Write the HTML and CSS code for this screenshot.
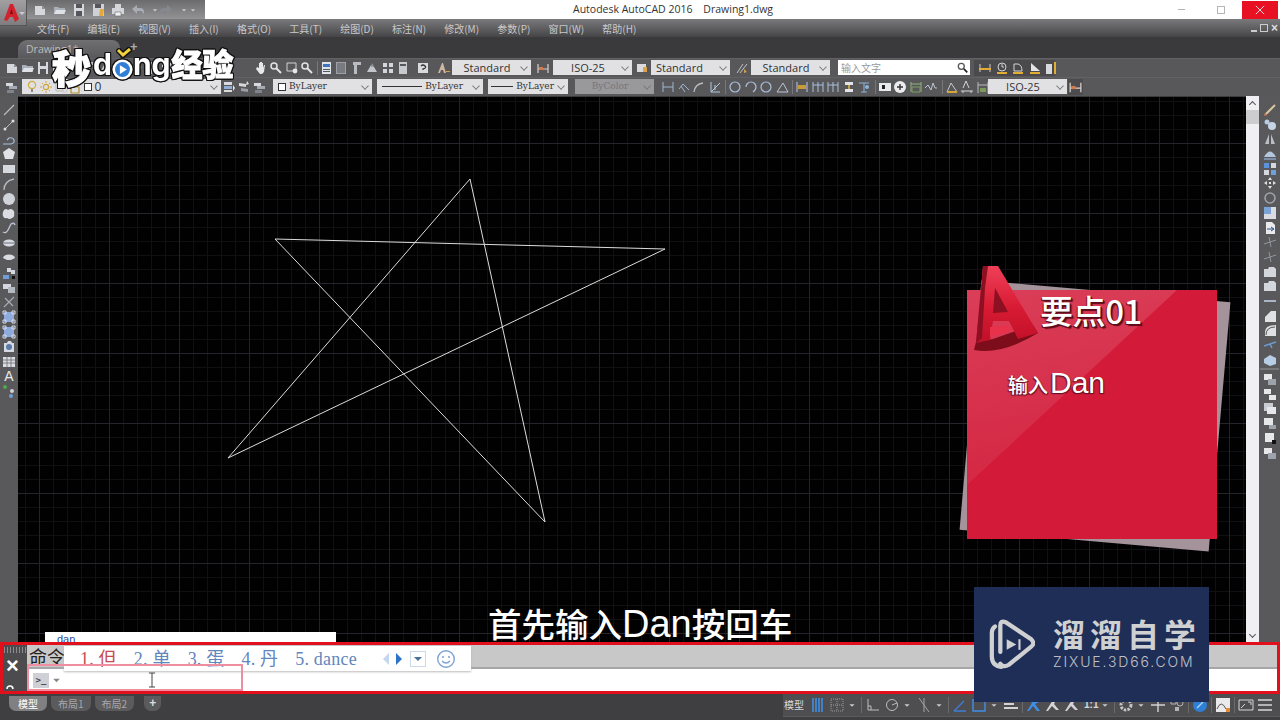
FILE: index.html
```html
<!DOCTYPE html>
<html lang="zh">
<head>
<meta charset="utf-8">
<title>Autodesk AutoCAD 2016</title>
<link rel="stylesheet" href="styles.css">
</head>
<body>
<svg class="defs" aria-hidden="true">
  <symbol id="doc" viewBox="0 0 14 14"><path d="M2 3h7l3 3v6H2z" fill="#d5d7dc"/><path d="M9 3v3h3" fill="#8f9299"/></symbol>
  <symbol id="open" viewBox="0 0 14 14"><path d="M1 4h4l1 1h6v6H1z" fill="#aab0ba"/><path d="M3 7h10l-2 4H1z" fill="#dfe1e6"/></symbol>
  <symbol id="save" viewBox="0 0 14 14"><path d="M2 1h10v12H2z" fill="#d6d8dd"/><path d="M4 1h6v4H4zM4 8h6v5H4z" fill="#55565c"/></symbol>
  <symbol id="saveas" viewBox="0 0 14 14"><path d="M1 1h11v12H1z" fill="#cfd1d6"/><path d="M3 1h6v4H3z" fill="#55565c"/><path d="M8 6l4 0-1 7H7z" fill="#e4a93c"/></symbol>
  <symbol id="print" viewBox="0 0 14 14"><path d="M4 1h6v4H4zM1 5h12v6H1z" fill="#d4d6db"/><path d="M4 9h6v4H4z" fill="#f0f0f2" stroke="#66676c" stroke-width=".6"/></symbol>
  <symbol id="undo" viewBox="0 0 14 14"><path d="M1 6l5-4v3h3q4 0 4 4v3q-1-4-4-4H6v3z" fill="#a8acb5"/></symbol>
  <symbol id="redo" viewBox="0 0 14 14"><path d="M13 6L8 2v3H5Q1 5 1 9v3q1-4 4-4h3v3z" fill="#85888f"/></symbol>
  <symbol id="caret" viewBox="0 0 14 14"><path d="M4 6h6l-3 3z" fill="#c9cbd0"/></symbol>
  <symbol id="hand" viewBox="0 0 14 14"><path d="M3 6l2 1V2h1v4V1h2v5V2h1v5l1-3h1l-1 7-2 2H6L2 8z" fill="#e6e7ea"/></symbol>
  <symbol id="zoom" viewBox="0 0 14 14"><circle cx="5" cy="5" r="3" fill="none" stroke="#e2e3e7" stroke-width="1.5"/><path d="M7 7l5 5" stroke="#e2e3e7" stroke-width="2"/></symbol>
  <symbol id="zoomw" viewBox="0 0 14 14"><path d="M2 2h9v8H2z" fill="none" stroke="#d0d2d8"/><circle cx="10" cy="10" r="2.4" fill="#e8e8ea"/></symbol>
  <symbol id="prop" viewBox="0 0 14 14"><path d="M3 1h9v12H3z" fill="#dfe3ea"/><path d="M4 3h7v3H4z" fill="#3f74bf"/><path d="M4 8h7v1H4zM4 10h7v1H4z" fill="#56585f"/></symbol>
  <symbol id="sheet" viewBox="0 0 14 14"><path d="M2 1h10v12H2z" fill="#9da0a6"/><path d="M3 3h8M3 5h8M3 7h8M3 9h8M3 11h8" stroke="#55565c"/></symbol>
  <symbol id="tool" viewBox="0 0 14 14"><path d="M3 1h8v3H7v9H4V4H3z" fill="#b9bcc3"/></symbol>
  <symbol id="cup" viewBox="0 0 14 14"><path d="M2 11l4-7 3 2 3 5z" fill="#c2c5cb"/><path d="M7 2l2 3-3 1z" fill="#8d9098"/></symbol>
  <symbol id="sheets" viewBox="0 0 14 14"><path d="M2 2h4v4H2zM8 2h4v4H8zM2 8h4v4H2zM8 8h4v4H8z" fill="#d3d5da"/></symbol>
  <symbol id="calc" viewBox="0 0 14 14"><path d="M3 1h8v12H3z" fill="#c8cad0"/><path d="M4 3h6v2H4z" fill="#56575c"/></symbol>
  <symbol id="help" viewBox="0 0 14 14"><path d="M2 2h10v10H2z" fill="#d9dade"/><path d="M5 5q2-2 4 0t-2 3v1" fill="none" stroke="#333" stroke-width="1.3"/></symbol>
  <symbol id="txtst" viewBox="0 0 14 14"><path d="M1 12L5 2h1l3 10H7l-1-3H4l-1 3z" fill="#cdb7a2"/><path d="M9 10h4v1H9z" fill="#d89c4a"/></symbol>
  <symbol id="dimst" viewBox="0 0 14 14"><path d="M2 3v9M12 3v9M2 8h10" stroke="#d7d0c8" stroke-width="1.2" fill="none"/><path d="M3 6h4v3H3z" fill="#d27a4a"/></symbol>
  <symbol id="tbst" viewBox="0 0 14 14"><path d="M2 3h9v8H2z" fill="#d8dade"/><path d="M8 6l4 0v5H8z" fill="#dca24c"/></symbol>
  <symbol id="mlst" viewBox="0 0 14 14"><path d="M2 12L8 3M5 12l7-9" stroke="#bfc2c8" fill="none"/><path d="M9 8l3 3-3 1z" fill="#d2a24b"/></symbol>
  <symbol id="y1" viewBox="0 0 14 14"><path d="M2 3v8M12 3v8" stroke="#c8cad0"/><path d="M1 7h12v2H1z" fill="#e1ad34"/></symbol>
  <symbol id="y2" viewBox="0 0 14 14"><circle cx="7" cy="6" r="4" fill="none" stroke="#d0d2d8"/><path d="M7 3v3h2" stroke="#d0d2d8" fill="none"/><path d="M2 11h10v2H2z" fill="#e1ad34"/></symbol>
  <symbol id="y3" viewBox="0 0 14 14"><path d="M3 10V3h4q4 1 4 7z" fill="none" stroke="#d0d2d8"/><path d="M2 11h10v2H2z" fill="#e1ad34"/></symbol>
  <symbol id="y4" viewBox="0 0 14 14"><path d="M3 10V2l9 8z" fill="#e2e3e6"/><path d="M2 11h10v2H2z" fill="#e1ad34"/></symbol>
  <symbol id="y5" viewBox="0 0 14 14"><path d="M2 3h6v10H2z" fill="#d7d9de"/><path d="M10 1h2v12h-2z" fill="#e1ad34"/></symbol>
  <symbol id="layer" viewBox="0 0 14 14"><path d="M1 3h7v3H1z" fill="#d6d8dc"/><path d="M4 6h8v3H4z" fill="#a7abb3"/><path d="M2 10h7v3H2z" fill="#7f838b"/></symbol>
  <symbol id="bulb" viewBox="0 0 14 14"><circle cx="7" cy="5" r="3.6" fill="none" stroke="#d2ac3c" stroke-width="1.2"/><path d="M6 9h2v3H6z" fill="#8a8a8a"/></symbol>
  <symbol id="sun" viewBox="0 0 14 14"><circle cx="7" cy="7" r="2.6" fill="none" stroke="#cfa53a" stroke-width="1.2"/><path d="M7 1v2M7 11v2M1 7h2M11 7h2M3 3l1 1M10 10l1 1M3 11l1-1M10 4l1-1" stroke="#cfa53a"/></symbol>
  <symbol id="frz" viewBox="0 0 14 14"><path d="M2 3h7v8H2z" fill="none" stroke="#b8b8b8"/><path d="M8 7h5v5H8z" fill="none" stroke="#c9c9c9"/></symbol>
  <symbol id="lock" viewBox="0 0 14 14"><path d="M3 7h8v6H3z" fill="none" stroke="#b08e2c" stroke-width="1.2"/><path d="M5 7V4q2-3 4 0" fill="none" stroke="#b08e2c"/></symbol>
  <symbol id="lyr2" viewBox="0 0 14 14"><path d="M2 2h8v3H2z" fill="#d8dade"/><path d="M2 6h8v3H2z" fill="#8faed8"/><path d="M2 10h8v2H2z" fill="#d8dade"/><path d="M11 5l2 3-2 3z" fill="#e7e8ea"/></symbol>
  <symbol id="lyr3" viewBox="0 0 14 14"><path d="M2 3l7 1v3L2 6z" fill="#d6d8dc"/><path d="M4 8l7 1v3l-7-1z" fill="#9a9ea6"/><path d="M10 1l2 3-3 1z" fill="#dfe0e4"/></symbol>
  <symbol id="dim1" viewBox="0 0 14 14"><path d="M2 2v10M12 2v10M2 7h10" stroke="#9fb6d2" fill="none"/></symbol>
  <symbol id="dim2" viewBox="0 0 14 14"><path d="M2 9l4-5 6 6M4 6l4 6" stroke="#9fb6d2" fill="none"/></symbol>
  <symbol id="dim3" viewBox="0 0 14 14"><path d="M2 12q1-8 9-9" stroke="#b8bcc3" fill="none" stroke-width="1.3"/></symbol>
  <symbol id="dim4" viewBox="0 0 14 14"><path d="M3 2v10h9M3 12l9-9M7 5v5" stroke="#b3c7de" fill="none"/></symbol>
  <symbol id="cir" viewBox="0 0 14 14"><circle cx="7" cy="7" r="5" fill="none" stroke="#a9c0dc" stroke-width="1.2"/></symbol>
  <symbol id="arc" viewBox="0 0 14 14"><path d="M2 7a5 5 0 0 1 10 0q0 3-3 5" fill="none" stroke="#a9c0dc" stroke-width="1.2"/></symbol>
  <symbol id="ang" viewBox="0 0 14 14"><path d="M2 12h11L8 3z" fill="none" stroke="#b9c4d4"/></symbol>
  <symbol id="ydim" viewBox="0 0 14 14"><path d="M2 2v10M12 2v10" stroke="#b7cce4"/><path d="M3 5h8v4H3z" fill="#c99a35"/></symbol>
  <symbol id="bdim" viewBox="0 0 14 14"><path d="M2 2v10M7 2v10M12 2v10M2 5h10" stroke="#a8c0dc" fill="none"/></symbol>
  <symbol id="tol" viewBox="0 0 14 14"><path d="M3 2h8v3H3zM3 9h8v3H3z" fill="#e3e4e7"/><path d="M6 5h2v4H6z" fill="#c0a04a"/></symbol>
  <symbol id="bal" viewBox="0 0 14 14"><path d="M2 3h10M7 3v9M4 12h6" stroke="#8eb4d8" fill="none"/><circle cx="10" cy="7" r="2" fill="#8eb4d8"/></symbol>
  <symbol id="tsp" viewBox="0 0 14 14"><path d="M1 3h12v8H1z" fill="#e8e9ec"/><path d="M4 5h3v4H4z" fill="#222"/></symbol>
  <symbol id="cen" viewBox="0 0 14 14"><circle cx="7" cy="7" r="6" fill="#ececee"/><path d="M7 4v6M4 7h6" stroke="#333" stroke-width="1.4"/></symbol>
  <symbol id="gfr" viewBox="0 0 14 14"><path d="M2 2v10M12 2v10M2 4h10" stroke="#8eb37a" fill="none"/><path d="M3 7h8v5H3z" fill="none" stroke="#7a9e62"/></symbol>
  <symbol id="jog" viewBox="0 0 14 14"><path d="M1 8l3-3 3 5 2-7 2 5h2" stroke="#bcc9d6" fill="none"/></symbol>
  <symbol id="lead" viewBox="0 0 14 14"><path d="M2 12l4-9 6 9z" fill="none" stroke="#c8c8cc"/><path d="M2 11h10v2H2z" fill="#d4a63a"/></symbol>
  <symbol id="lineA" viewBox="0 0 14 14"><path d="M3 8l3-7 3 7M1 11h12M3 11v2M11 11v2" stroke="#d2d4da" fill="none"/></symbol>
  <symbol id="lineB" viewBox="0 0 14 14"><path d="M2 2v11M12 2v11M2 5h10" stroke="#b8bcc3" fill="none"/><path d="M4 8h6v4H4z" fill="#7d9a58"/></symbol>
  <symbol id="line" viewBox="0 0 14 14"><path d="M2 12L12 2" stroke="#b5bac4" stroke-width="1.3"/></symbol>
  <symbol id="xline" viewBox="0 0 14 14"><path d="M2 12L12 2" stroke="#b5bac4"/><circle cx="3" cy="11" r="1.5" fill="#dcdde2"/><circle cx="11" cy="3" r="1.5" fill="#dcdde2"/></symbol>
  <symbol id="pline" viewBox="0 0 14 14"><path d="M1 11h8q4-1 3-4T7 5l-2 2" fill="none" stroke="#a9c2de" stroke-width="1.2"/></symbol>
  <symbol id="poly" viewBox="0 0 14 14"><path d="M7 1l6 4-2 7H3L1 5z" fill="#dfe1e6"/></symbol>
  <symbol id="rect" viewBox="0 0 14 14"><path d="M1 3h12v8H1z" fill="#d5d8de"/></symbol>
  <symbol id="arcl" viewBox="0 0 14 14"><path d="M2 13q0-9 10-11" fill="none" stroke="#b5bac4" stroke-width="1.3"/></symbol>
  <symbol id="circle" viewBox="0 0 14 14"><circle cx="7" cy="7" r="6" fill="#d0d3da"/></symbol>
  <symbol id="cloud" viewBox="0 0 14 14"><path d="M2 3q2-2 4 0 3-2 5 0 2 2 1 4 1 3-2 4-2 2-5 0-3 1-4-2-1-3 1-6z" fill="#dadce2"/></symbol>
  <symbol id="spl" viewBox="0 0 14 14"><path d="M1 11q3 2 5-2t3-6q3-2 4 1" fill="none" stroke="#b9c2d0" stroke-width="1.4"/></symbol>
  <symbol id="ell" viewBox="0 0 14 14"><ellipse cx="7" cy="7" rx="6" ry="3.5" fill="#d8dbe2"/><path d="M1 7h12" stroke="#6d7077"/></symbol>
  <symbol id="ella" viewBox="0 0 14 14"><path d="M1 7a6 3.5 0 0 1 12 0l-4 2H5z" fill="#d8dbe2"/></symbol>
  <symbol id="ins" viewBox="0 0 14 14"><path d="M5 2h4v4H5zM9 4h4v4H9z" fill="#d5d8de"/><path d="M1 9h6v4H1z" fill="#6f9fd6"/><path d="M10 10h3v3h-3z" fill="#111"/></symbol>
  <symbol id="blk" viewBox="0 0 14 14"><path d="M1 3h8v5H1z" fill="#d4d7dd"/><path d="M6 6h7v6H6z" fill="#b4b8c0"/></symbol>
  <symbol id="xl" viewBox="0 0 14 14"><path d="M2 12L12 2M3 3l8 8" stroke="#a9aeb8" stroke-width="1.1"/></symbol>
  <symbol id="hat" viewBox="0 0 14 14"><path d="M2 2h10v10H2z" fill="#8faadc"/><path d="M1 1h3v3H1zM10 1h3v3h-3zM1 10h3v3H1zM10 10h3v3h-3z" fill="none" stroke="#d8dbe2"/></symbol>
  <symbol id="reg" viewBox="0 0 14 14"><path d="M2 3h3l1-2h3l1 2h2v9H2z" fill="#d6dae2"/><circle cx="7" cy="7" r="3" fill="#5b7ba8"/></symbol>
  <symbol id="table" viewBox="0 0 14 14"><path d="M1 2h12v10H1z" fill="#dadce1"/><path d="M1 5h12M1 8h12M5 2v10M9 2v10" stroke="#6a6c72" stroke-width=".8"/></symbol>
  <symbol id="add" viewBox="0 0 14 14"><circle cx="3" cy="3" r="2" fill="#4fa84f"/><circle cx="10" cy="7" r="2" fill="#cfd2d8"/><circle cx="9" cy="12" r="2" fill="#6f9fd6"/></symbol>
  <symbol id="brush" viewBox="0 0 14 14"><path d="M2 12L12 2" stroke="#d8c79c" stroke-width="2"/><path d="M1 13l3-1-2-2z" fill="#c56a3a"/></symbol>
  <symbol id="erase" viewBox="0 0 14 14"><circle cx="4" cy="4" r="2.5" fill="#b7cbe3"/><circle cx="9" cy="8" r="4" fill="#c6d4e6"/></symbol>
  <symbol id="mir" viewBox="0 0 14 14"><path d="M6 2v10H2zM8 2v10h4z" fill="#b9bdc4"/></symbol>
  <symbol id="off" viewBox="0 0 14 14"><path d="M1 10q6-11 12 0z" fill="#b4c6dc"/><path d="M1 11h12v2H1z" fill="#7d8fa8"/></symbol>
  <symbol id="arr" viewBox="0 0 14 14"><path d="M1 1h5v5H1z" fill="#5a92dc"/><path d="M8 1h5v5H8zM1 8h5v5H1z" fill="#d4d7dd"/><path d="M8 8h5v5H8z" fill="#6ea0e0"/></symbol>
  <symbol id="move" viewBox="0 0 14 14"><path d="M7 1l2 3H5zM7 13l2-3H5zM1 7l3-2v4zM13 7l-3-2v4z" fill="#dfe1e6"/><path d="M6 6h2v2H6z" fill="#dfe1e6"/></symbol>
  <symbol id="rot" viewBox="0 0 14 14"><circle cx="7" cy="7" r="5" fill="none" stroke="#9da2ab" stroke-width="1.6"/></symbol>
  <symbol id="scl" viewBox="0 0 14 14"><path d="M1 1h12v12H1z" fill="#d9dce2"/><path d="M1 1h7v7H1z" fill="#7aa3d6"/></symbol>
  <symbol id="str" viewBox="0 0 14 14"><path d="M3 1h6l3 3v9H3z" fill="#e9eaee"/><path d="M4 8h6M8 6l3 2-3 2" stroke="#2b4f85" fill="none"/></symbol>
  <symbol id="brk" viewBox="0 0 14 14"><path d="M1 9L13 5M6 2l2 10" stroke="#9296a0"/></symbol>
  <symbol id="fold" viewBox="0 0 14 14"><path d="M1 4h4l1-2h5l2 2v8H1z" fill="#d3d6dc"/></symbol>
  <symbol id="dash" viewBox="0 0 14 14"><path d="M1 7h12" stroke="#a9b6c8" stroke-width="2"/></symbol>
  <symbol id="cham" viewBox="0 0 14 14"><path d="M2 13V8l6-6h5v11z" fill="#dee0e5"/></symbol>
  <symbol id="filt" viewBox="0 0 14 14"><path d="M2 13V9q0-7 11-7v11z" fill="#dee0e5"/><path d="M3 12q0-8 9-8" stroke="#555" fill="none"/></symbol>
  <symbol id="exp" viewBox="0 0 14 14"><path d="M1 8l6-2 6-2M7 6l2 4" stroke="#6f9bcc" fill="none" stroke-width="1.5"/></symbol>
  <symbol id="box" viewBox="0 0 14 14"><path d="M1 6l6-4 6 3v6l-6 2-6-3z" fill="#b7cde6"/></symbol>
  <symbol id="dr" viewBox="0 0 14 14"><path d="M1 2h8v6H1z" fill="#e6e7ea"/><path d="M5 7h8v6H5z" fill="#9ea2aa"/></symbol>
  <symbol id="dr2" viewBox="0 0 14 14"><path d="M1 2h7v5H1zM6 8h7v5H6z" fill="#e6e7ea"/></symbol>
  <symbol id="dr3" viewBox="0 0 14 14"><path d="M1 2h9v8H1z" fill="#c9ccd2"/><path d="M4 6h9v7H4z" fill="#e6e7ea"/></symbol>
  <symbol id="dr4" viewBox="0 0 14 14"><path d="M1 2h9v7H1z" fill="#e6e7ea"/><path d="M6 9h7v4H6z" fill="#9ea2aa"/></symbol>
  <symbol id="dr5" viewBox="0 0 14 14"><path d="M2 2h9v9H2z" fill="#e6e7ea"/><path d="M9 9h4v4H9z" fill="#111"/></symbol>
  <symbol id="grid" viewBox="0 0 16 16"><path d="M3 1v14M6 1v14M9 1v14M12 1v14" stroke="#3f8fe8" stroke-width="1.6"/></symbol>
  <symbol id="dots" viewBox="0 0 16 16"><path d="M2 2h12v12H2z" fill="none" stroke="#9a9a9d" stroke-dasharray="1 1"/><path d="M2 8h12M8 2v12" stroke="#9a9a9d" stroke-dasharray="1 1"/></symbol>
  <symbol id="ortho" viewBox="0 0 16 16"><path d="M3 2v11h11M3 9h3v4" stroke="#bdbdc0" fill="none"/></symbol>
  <symbol id="polar" viewBox="0 0 16 16"><circle cx="8" cy="8" r="5.5" fill="none" stroke="#bdbdc0"/><path d="M8 8l5-2" stroke="#bdbdc0"/></symbol>
  <symbol id="iso" viewBox="0 0 16 16"><path d="M3 1l10 14M8 1v14" stroke="#a6a6a9" fill="none"/></symbol>
  <symbol id="ang2" viewBox="0 0 16 16"><path d="M2 14h12M2 14L12 4" stroke="#3f7fd8" stroke-width="1.3" fill="none"/></symbol>
  <symbol id="osn" viewBox="0 0 16 16"><path d="M2 3h12v11H2z" fill="none" stroke="#3f8fe8" stroke-width="1.4"/><path d="M6 0h4v3H6z" fill="#2fae4a"/></symbol>
  <symbol id="lw" viewBox="0 0 16 16"><path d="M1 3h14M1 7h10M1 11h14" stroke="#d2d2d5" stroke-width="2"/></symbol>
  <symbol id="per" viewBox="0 0 16 16"><path d="M8 2q5 0 5 3L9 7l5 7h-3L7 9l-4 5H1l5-8-3-3z" fill="#3f8fe8"/></symbol>
  <symbol id="per2" viewBox="0 0 16 16"><path d="M9 2l2 1-2 4 5 6h-3L7 9l-4 5H1l5-8z" fill="#d4d4d8"/></symbol>
  <symbol id="gear" viewBox="0 0 16 16"><circle cx="8" cy="8" r="5" fill="none" stroke="#c4c4c8" stroke-width="3" stroke-dasharray="2.5 1.2"/></symbol>
  <symbol id="plus" viewBox="0 0 16 16"><path d="M8 1v14M1 8h14" stroke="#d2d2d5" stroke-width="1.4"/></symbol>
  <symbol id="wk" viewBox="0 0 16 16"><path d="M2 2h5v5H2z" fill="none" stroke="#b4b4b8"/><circle cx="11" cy="6" r="3" fill="none" stroke="#b4b4b8"/><path d="M6 10h4v4H6z" fill="#b4b4b8"/></symbol>
  <symbol id="iso2" viewBox="0 0 16 16"><circle cx="8" cy="8" r="7" fill="#2e7fd6"/><path d="M5 11l6-6" stroke="#a9d0f5" stroke-width="1.4"/></symbol>
  <symbol id="pic" viewBox="0 0 16 16"><path d="M1 1h14v14H1z" fill="#e9e9ec"/><path d="M2 12q4-10 9 0" fill="none" stroke="#555"/><path d="M11 11h4v4h-4z" fill="#dd8a3a"/></symbol>
  <symbol id="full" viewBox="0 0 16 16"><path d="M1 3h14v10H1z" fill="none" stroke="#d6d6d9"/><path d="M3 11l4-4M10 5h3v3" stroke="#d6d6d9" fill="none"/></symbol>
  <symbol id="menu" viewBox="0 0 16 16"><path d="M1 3h14M1 8h14M1 13h14" stroke="#d6d6d9" stroke-width="1.6"/></symbol>
  <linearGradient id="agrad" x1="0" y1="0" x2="0" y2="1"><stop offset="0" stop-color="#ee4058"/><stop offset=".55" stop-color="#d81a33"/><stop offset="1" stop-color="#c01028"/></linearGradient>
</svg>

<div class="app">
  <header class="titlebar">
    <div class="qat">
      <div class="appbtn">
        <svg class="applogo" viewBox="0 0 20 20"><path d="M8 1h3l6 15-4 3-2-5H8l-3 4-3-1z" fill="#d3222e"/><path d="M9.5 6l-1.5 5h3z" fill="#6d0f17"/></svg>
        <svg class="ic caret-sm"><use href="#caret"/></svg>
      </div>
      <svg class="ic"><use href="#doc"/></svg>
      <svg class="ic"><use href="#open"/></svg>
      <svg class="ic"><use href="#save"/></svg>
      <svg class="ic"><use href="#saveas"/></svg>
      <svg class="ic"><use href="#print"/></svg>
      <svg class="ic"><use href="#undo"/></svg>
      <svg class="ic narrow"><use href="#caret"/></svg>
      <svg class="ic"><use href="#redo"/></svg>
      <svg class="ic narrow"><use href="#caret"/></svg>
      <svg class="ic narrow"><use href="#caret"/></svg>
    </div>
    <div class="apptitle">Autodesk AutoCAD 2016&nbsp;&nbsp;&nbsp;&nbsp;Drawing1.dwg</div>
    <div class="winbtns">
      <span class="winmin"></span>
      <span class="winmax"></span>
      <span class="winclose">
        <svg class="closeglyph" viewBox="0 0 12 12"><path d="M1 1l10 10M11 1L1 11" stroke="#fff" stroke-width="1"/></svg>
      </span>
    </div>
  </header>

  <nav class="menubar">
    <span>文件(F)</span><span>编辑(E)</span><span>视图(V)</span><span>插入(I)</span><span>格式(O)</span><span>工具(T)</span><span>绘图(D)</span><span>标注(N)</span><span>修改(M)</span><span>参数(P)</span><span>窗口(W)</span><span>帮助(H)</span>
    <div class="docbtns">
      <span class="docmin"></span><span class="docmax"></span><span class="docx">×</span>
    </div>
  </nav>

  <div class="tabbar">
    <div class="doctab">Drawing1*</div>
    <span class="tabplus">+</span>
  </div>

  <div class="tbrow">
    <svg class="ic"><use href="#doc"/></svg><svg class="ic"><use href="#open"/></svg><svg class="ic"><use href="#save"/></svg><svg class="ic"><use href="#print"/></svg><svg class="ic"><use href="#zoom"/></svg>
    <svg class="ic"><use href="#tool"/></svg><svg class="ic"><use href="#cup"/></svg><svg class="ic"><use href="#undo"/></svg><svg class="ic"><use href="#redo"/></svg><svg class="ic"><use href="#tool"/></svg>
    <svg class="ic"><use href="#sheets"/></svg><svg class="ic"><use href="#cup"/></svg><svg class="ic"><use href="#undo"/></svg><svg class="ic"><use href="#cup"/></svg><svg class="ic narrow2"><use href="#caret"/></svg>
    <svg class="ic gap-hand"><use href="#hand"/></svg><svg class="ic"><use href="#zoom"/></svg><svg class="ic"><use href="#zoomw"/></svg><svg class="ic"><use href="#zoom"/></svg>
    <i class="sep"></i>
    <svg class="ic"><use href="#prop"/></svg><svg class="ic"><use href="#sheet"/></svg><svg class="ic"><use href="#tool"/></svg><svg class="ic"><use href="#cup"/></svg><svg class="ic"><use href="#sheets"/></svg><svg class="ic"><use href="#calc"/></svg>
    <svg class="ic help"><use href="#help"/></svg>
    <svg class="ic st-a"><use href="#txtst"/></svg>
    <div class="combo w79 center">Standard</div>
    <svg class="ic st-b"><use href="#dimst"/></svg>
    <div class="combo w79 center">ISO-25</div>
    <svg class="ic st-b2"><use href="#tbst"/></svg>
    <div class="combo w79">Standard</div>
    <svg class="ic st-c"><use href="#mlst"/></svg>
    <div class="combo w79 center">Standard</div>
    <div class="search">
      <span>输入文字</span>
      <svg class="searchglass" viewBox="0 0 14 14"><circle cx="5" cy="5" r="3.5" fill="#fff" stroke="#555" stroke-width="1.5"/><path d="M8 8l4 4" stroke="#222" stroke-width="2"/></svg>
    </div>
    <div class="ygroup">
      <svg class="ic"><use href="#y1"/></svg><svg class="ic"><use href="#y2"/></svg><svg class="ic"><use href="#y3"/></svg><svg class="ic"><use href="#y4"/></svg><svg class="ic"><use href="#y5"/></svg>
    </div>
  </div>

  <div class="tbrow">
    <svg class="ic"><use href="#layer"/></svg>
    <div class="combo layers">
      <svg class="ic"><use href="#bulb"/></svg><svg class="ic tight"><use href="#sun"/></svg><svg class="ic tight"><use href="#frz"/></svg><svg class="ic tight"><use href="#lock"/></svg>
      <span class="sw"></span><span>0</span>
    </div>
    <svg class="ic l1"><use href="#lyr2"/></svg><svg class="ic"><use href="#lyr3"/></svg><svg class="ic"><use href="#layer"/></svg>
    <div class="combo mono w99 l2"><span class="sw"></span>ByLayer</div>
    <div class="combo mono w106 l3"><span class="lineglyph"></span>ByLayer</div>
    <div class="combo mono w80 l4"><span class="lineglyph short"></span>ByLayer</div>
    <div class="combo mono w79 l5 disabled">ByColor</div>
    <div class="dimicons">
      <svg class="ic"><use href="#dim1"/></svg><svg class="ic"><use href="#dim2"/></svg><svg class="ic"><use href="#dim3"/></svg><svg class="ic"><use href="#dim4"/></svg><i class="sep2"></i>
      <svg class="ic"><use href="#cir"/></svg><svg class="ic"><use href="#arc"/></svg><svg class="ic"><use href="#cir"/></svg><svg class="ic"><use href="#ang"/></svg><i class="sep2"></i>
      <svg class="ic"><use href="#ydim"/></svg><svg class="ic"><use href="#bdim"/></svg><svg class="ic"><use href="#bdim"/></svg><svg class="ic"><use href="#tol"/></svg><svg class="ic"><use href="#bal"/></svg><i class="sep2"></i>
      <svg class="ic"><use href="#tsp"/></svg><svg class="ic"><use href="#cen"/></svg><svg class="ic"><use href="#gfr"/></svg><svg class="ic"><use href="#jog"/></svg><i class="sep2"></i>
      <svg class="ic"><use href="#lead"/></svg><svg class="ic"><use href="#lineA"/></svg><svg class="ic"><use href="#lineB"/></svg>
    </div>
    <div class="combo w79 center l6">ISO-25</div>
    <svg class="ic st-d"><use href="#dimst"/></svg>
  </div>

  <main class="work">
    <aside class="lefttools">
      <svg class="ic"><use href="#line"/></svg><svg class="ic"><use href="#xline"/></svg><svg class="ic"><use href="#pline"/></svg><svg class="ic"><use href="#poly"/></svg><svg class="ic"><use href="#rect"/></svg>
      <svg class="ic"><use href="#arcl"/></svg><svg class="ic"><use href="#circle"/></svg><svg class="ic"><use href="#cloud"/></svg><svg class="ic"><use href="#spl"/></svg><svg class="ic"><use href="#ell"/></svg>
      <svg class="ic"><use href="#ella"/></svg><svg class="ic"><use href="#ins"/></svg><svg class="ic"><use href="#blk"/></svg><svg class="ic"><use href="#xl"/></svg><svg class="ic"><use href="#hat"/></svg>
      <svg class="ic"><use href="#hat"/></svg><svg class="ic"><use href="#reg"/></svg><svg class="ic"><use href="#table"/></svg><span class="toolA">A</span><svg class="ic"><use href="#add"/></svg>
    </aside>
    <section class="canvas">
      <svg class="star" viewBox="18 96 1228 546"><path d="M275 239L665 249L228 458L470 179L545 522Z" fill="none" stroke="#dcdcda" stroke-width="1"/></svg>
      <div class="dan-input">dan</div>
    </section>
    <div class="vscroll">
      <div class="arrow-up"></div>
      <div class="thumb"></div>
      <div class="arrow-down"></div>
    </div>
    <aside class="righttools">
      <svg class="ic"><use href="#brush"/></svg><svg class="ic"><use href="#erase"/></svg><svg class="ic"><use href="#mir"/></svg><svg class="ic"><use href="#off"/></svg><svg class="ic"><use href="#arr"/></svg><svg class="ic"><use href="#move"/></svg>
      <svg class="ic"><use href="#rot"/></svg><svg class="ic"><use href="#scl"/></svg><svg class="ic"><use href="#str"/></svg><svg class="ic"><use href="#brk"/></svg><svg class="ic"><use href="#brk"/></svg><svg class="ic"><use href="#fold"/></svg>
      <svg class="ic"><use href="#fold"/></svg><svg class="ic"><use href="#dash"/></svg><svg class="ic"><use href="#cham"/></svg><svg class="ic"><use href="#filt"/></svg><svg class="ic"><use href="#exp"/></svg><svg class="ic"><use href="#box"/></svg>
      <i class="hsep"></i>
      <svg class="ic"><use href="#dr"/></svg><svg class="ic"><use href="#dr2"/></svg><svg class="ic"><use href="#dr3"/></svg><svg class="ic"><use href="#dr4"/></svg><svg class="ic"><use href="#dr5"/></svg><svg class="ic"><use href="#dr"/></svg>
    </aside>
  </main>

  <section class="cmd">
    <div class="cmdside">
      <span class="cmdgrip"></span>
      <span class="cmdx">×</span>
      <svg class="cmdhook" viewBox="0 0 10 8"><path d="M2 6a3 3 0 1 1 6 0M8 6l-1-2" fill="none" stroke="#fff" stroke-width="1.5"/></svg>
    </div>
    <div class="cmdbody">
      <div class="cmdhist"><span class="cmdlabel">命令</span></div>
      <div class="cmdline">
        <span class="prompt">&gt;_</span>
        <svg class="promptcaret" viewBox="0 0 8 6"><path d="M0 1h8L4 5z" fill="#888"/></svg>
      </div>
    </div>
    <div class="ime">
      <span class="cand first">1. 但</span><span class="cand">2. 单</span><span class="cand">3. 蛋</span><span class="cand">4. 丹</span><span class="cand">5. dance</span>
      <svg class="imenav" viewBox="0 0 24 14"><path d="M7 1L1 7l6 6z" fill="#c5d6ee"/><path d="M14 1l6 6-6 6z" fill="#2d73c8"/></svg>
      <span class="imedrop"><svg viewBox="0 0 8 6"><path d="M0 1h8L4 5z" fill="#4b6f9c"/></svg></span>
      <svg class="imesmile" viewBox="0 0 20 20"><circle cx="10" cy="10" r="8.3" fill="none" stroke="#7ea2d6" stroke-width="1.4"/><circle cx="7" cy="8" r="1" fill="#7ea2d6"/><circle cx="13" cy="8" r="1" fill="#7ea2d6"/><path d="M6 12q4 4 8 0" fill="none" stroke="#7ea2d6" stroke-width="1.2"/></svg>
    </div>
    <div class="pinkbox"></div>
    <svg class="ibeam" viewBox="0 0 8 16"><path d="M1 1h6M4 1v14M1 15h6" fill="none" stroke="#444" stroke-width="1"/></svg>
  </section>

  <footer class="status">
    <div class="stabs">
      <span class="stab on">模型</span><span class="stab">布局1</span><span class="stab">布局2</span><span class="stab addt">+</span>
    </div>
    <div class="sright">
      <span class="smodel">模型</span>
      <svg class="si"><use href="#grid"/></svg><svg class="si"><use href="#dots"/></svg><svg class="si sc"><use href="#caret"/></svg><i class="ssep"></i>
      <svg class="si"><use href="#ortho"/></svg><svg class="si"><use href="#polar"/></svg><svg class="si sc"><use href="#caret"/></svg><svg class="si"><use href="#iso"/></svg><svg class="si sc"><use href="#caret"/></svg><i class="ssep"></i>
      <svg class="si"><use href="#ang2"/></svg><svg class="si"><use href="#osn"/></svg><svg class="si sc"><use href="#caret"/></svg><svg class="si"><use href="#lw"/></svg><i class="ssep"></i>
      <svg class="si"><use href="#per"/></svg><svg class="si"><use href="#per2"/></svg><svg class="si"><use href="#per2"/></svg><span class="sratio">1:1</span><svg class="si sc"><use href="#caret"/></svg><i class="ssep"></i>
      <svg class="si"><use href="#gear"/></svg><svg class="si sc"><use href="#caret"/></svg><svg class="si"><use href="#plus"/></svg><svg class="si"><use href="#wk"/></svg><i class="ssep"></i>
      <svg class="si"><use href="#iso2"/></svg><i class="ssep"></i>
      <svg class="si"><use href="#pic"/></svg><i class="ssep"></i>
      <svg class="si"><use href="#full"/></svg><svg class="si"><use href="#menu"/></svg>
    </div>
  </footer>
</div>

<div class="subtitle">首先输入<span class="sub-en">Dan</span>按回车</div>

<div class="brand">
  <span class="brand-first">秒</span><span class="brand-en">d</span><span class="brand-o"><svg viewBox="0 0 24 24"><circle cx="12" cy="12" r="11.5" fill="#fff"/><circle cx="12" cy="12" r="8.5" fill="#2f7fd6"/><path d="M9 7l8 5-8 5z" fill="#fff"/></svg><svg class="brand-tick" viewBox="0 0 16 10"><path d="M2 2l5 5 7-6" fill="none" stroke="#f2d23a" stroke-width="3"/></svg></span><span class="brand-en">ng</span><span class="brand-cn">经验</span>
</div>

<div class="card">
  <div class="card-back"></div>
  <div class="card-front">
    <div class="card-gloss"></div>
    <div class="card-title">要点01</div>
    <div class="card-text"><span class="small">输入</span>Dan</div>
  </div>
  <svg class="card-logo" viewBox="972 265 68 88">
    <path d="M974 350q28 5 64-17l-5-8-40 14-17 3z" fill="#7d0d1a"/>
    <path d="M983 266h15l40 67-20 6-9-18h-16l-3 19-14 3z" fill="url(#agrad)"/>
    <path d="M983 266h5l-3 22-3 50-6 5z" fill="#8c1022"/>
    <path d="M995 288l13 24-15 1z" fill="#8c1022"/>
    <path d="M990 327l18-2 3 6-21 6z" fill="#e8324c"/>
  </svg>
</div>

<div class="wm">
  <svg class="wm-icon" viewBox="3 1 43 47"><path d="M6 14q0-4 3-6M6 14v22q0 9 9 10" fill="none" stroke="#cfd0d2" stroke-width="4" stroke-linecap="round"/><path d="M14 32V7q0-5 5-3l24 16q4 4 0 7L22 44q-5 3-8-1" fill="none" stroke="#cfd0d2" stroke-width="4" stroke-linecap="round"/><path d="M20 20l9 5-9 5z" fill="#cfd0d2"/><path d="M31 20h2v10h-2z" fill="#cfd0d2"/></svg>
  <div class="wm-text">
    <div class="wm-cn">溜溜自学</div>
    <div class="wm-en">ZIXUE.3D66.COM</div>
  </div>
</div>
</body>
</html>
```

FILE: styles.css
```css
* { box-sizing: border-box; }
html, body { margin: 0; padding: 0; }
body {
  width: 1280px;
  height: 720px;
  overflow: hidden;
  position: relative;
  background: #000;
  font-family: "Liberation Sans", "Noto Sans CJK SC", sans-serif;
}
.defs { position: absolute; width: 0; height: 0; overflow: hidden; }
.app { display: flex; flex-direction: column; height: 720px; }

.ic { width: 14px; height: 14px; margin-right: 1.5px; flex: none; display: block; filter: blur(.35px); }
.ic.narrow { width: 10px; }
.ic.narrow2 { width: 6px; }
.ic.tight { margin-left: -1px; }
.gap-hand { margin-left: 24px; }

/* title bar */
.titlebar { height: 19px; background: #fff; display: flex; align-items: center; position: relative; flex: none; }
.qat {
  width: 205px; height: 19px; display: flex; align-items: center;
  background: linear-gradient(#6b6a6d, #939295);
  padding-right: 4px;
}
.qat .ic { margin-right: 5.5px; }
.qat .ic.narrow { margin-right: -1px; }
.appbtn {
  width: 27px; height: 26px; align-self: flex-start; margin-right: 6px; flex: none;
  background: linear-gradient(#a19fa1, #7f7d7f);
  border-right: 1px solid #555; border-bottom: 1px solid #555;
  display: flex; align-items: center; position: relative; z-index: 2;
}
.applogo { width: 20px; height: 20px; margin-left: 2px; }
.caret-sm { position: absolute; left: 15px; top: 6px; }
.apptitle { position: absolute; left: 573px; top: 2px; font: 10.5px/15px "Open Sans", sans-serif; color: #333; white-space: nowrap; }
.winbtns { margin-left: auto; display: flex; align-items: center; height: 19px; padding-right: 2px; }
.winmin { width: 7px; height: 1px; background: #b5b5b5; margin-right: 32px; }
.winmax { width: 8px; height: 8px; border: 1px solid #b5b5b5; margin-right: 17px; }
.winclose { width: 36px; height: 18px; background: #e81123; display: flex; align-items: center; justify-content: center; }
.closeglyph { width: 10px; height: 10px; }

/* menu */
.menubar {
  height: 18px; flex: none; display: flex; align-items: center; gap: 18.2px; padding-left: 37px;
  background: linear-gradient(#7a797b, #454446);
  color: #c9c9cb; font-size: 10px; white-space: nowrap;
  font-family: "Noto Sans CJK SC", sans-serif;
}
.docbtns { margin-left: auto; display: flex; align-items: center; gap: 3px; padding-right: 2px; }
.docmin { width: 6px; height: 2px; background: #ccc; margin-top: 5px; }
.docmax { width: 8px; height: 8px; border: 1px solid #ccc; }
.docx { color: #ddd; font: bold 12px/12px "Liberation Sans", sans-serif; }

.tabbar { height: 21px; flex: none; background: #3a393b; position: relative; display: flex; align-items: flex-end; }
.doctab {
  width: 102px; height: 18px; margin-left: 18px; padding: 2px 0 0 8px;
  background: linear-gradient(#706f72, #59585b);
  border-radius: 9px 8px 0 0;
  color: #bdbdbf; font: 10.5px/15px "Open Sans", sans-serif;
}
.tabplus { margin-left: 10px; color: #aaa; font: bold 13px/18px "Liberation Sans", sans-serif; height: 20px; }

/* toolbars */
.tbrow { height: 19px; flex: none; background: #58575a; display: flex; align-items: center; padding-left: 5px; box-shadow: inset 0 1px 0 #626165; }
.sep { width: 1px; height: 14px; background: #77767a; margin: 0 1px; flex: none; }
.sep2 { width: 1px; height: 14px; background: #77767a; margin: 0 2px; flex: none; }
.help { margin-left: 4px; }
.st-a { margin-left: 6px; margin-right: 1px; }
.st-b { margin-left: 5px; margin-right: 3px; }
.st-b2 { margin-left: 3px; margin-right: 2px; }
.st-c { margin-left: 5px; margin-right: 2px; }
.st-d { margin-left: 1px; background: #4c4b4e; width: 15px; height: 16px; }
.combo {
  height: 15px; background: #e1e1e4; color: #333; font: 11px/15px "Open Sans", sans-serif;
  padding: 0 14px 0 5px; white-space: nowrap; position: relative; flex: none; display: flex; align-items: center;
}
.combo::after {
  content: ""; position: absolute; right: 4px; top: 4px; width: 5px; height: 5px;
  border-right: 1px solid #777; border-bottom: 1px solid #777; transform: rotate(45deg) scale(.9);
}
.combo.center { justify-content: center; }
.w79 { width: 79px; }
.w80 { width: 80px; }
.w99 { width: 99px; }
.w106 { width: 106px; }
.search {
  width: 132px; height: 15px; margin-left: 8px; background: #fff; color: #9a9a9a; flex: none;
  font: 10px/15px "Noto Sans CJK SC", sans-serif; padding-left: 3px; display: flex; justify-content: space-between; align-items: center;
}
.searchglass { width: 12px; height: 12px; margin-right: 1px; }
.ygroup { display: flex; align-items: center; gap: 1px; margin-left: 4px; padding-left: 4px; background: #4a494c; height: 16px; width: 81px; }
.layers { width: 199px; margin-left: 1px; padding-left: 3px; gap: 0; font-size: 12px; }
.sw { width: 8px; height: 8px; border: 1px solid #333; margin-right: 3px; background: #fff; flex: none; }
.l1 { margin-left: 1px; }
.l2 { margin-left: 5px; }
.l3 { margin-left: 5px; }
.l4 { margin-left: 5px; }
.l5 { margin-left: 7px; }
.l6 { margin-left: 3px; }
.mono { font: 9px/15px "DejaVu Serif", "Liberation Serif", serif; }
.combo.w106 { justify-content: flex-end; padding-right: 20px; }
.combo.w80 { justify-content: flex-end; padding-right: 14px; }
.lineglyph { width: 40px; height: 1px; background: #333; margin-right: 3px; flex: none; }
.lineglyph.short { width: 22px; }
.disabled { background: #99989b; color: #77767a; justify-content: center; }
.dimicons { display: flex; align-items: center; margin-left: 7px; width: 324px; flex: none; }

/* workspace */
.work { height: 546px; flex: none; display: flex; }
.lefttools { width: 18px; flex: none; background: #59585b; display: flex; flex-direction: column; align-items: center; gap: .8px; padding-top: 7px; }
.lefttools .ic { margin: 0; }
.toolA { width: 14px; height: 14px; color: #e8e8ea; font: 14px/14px "Liberation Sans", sans-serif; text-align: center; }
.righttools { width: 21px; flex: none; background: #59585b; display: flex; flex-direction: column; align-items: center; gap: .7px; padding-top: 7px; }
.righttools .ic { margin: 0; }
.hsep { width: 19px; height: 2px; background: #77767a; margin: 1px 0; flex: none; }
.canvas {
  flex: 1; position: relative; overflow: hidden; background-color: #010102;
  background-image:
    linear-gradient(90deg, #22222b 1px, transparent 1px),
    linear-gradient(#25252b 1px, transparent 1px),
    linear-gradient(90deg, #101013 1px, transparent 1px),
    linear-gradient(#101013 1px, transparent 1px);
  background-size: 70px 70px, 70px 70px, 14px 14px, 14px 14px;
  background-position: 21px 46px, 21px 46px, 21px 46px, 21px 46px;
  border-top: 1px solid #3c3c3e;
}
.star { position: absolute; left: 0; top: -1px; width: 1228px; height: 546px; }
.subtitle {
  position: absolute; left: 488px; top: 605px; color: #fff; white-space: nowrap;
  font: 500 33.5px/36px "Noto Sans CJK SC", sans-serif;
}
.sub-en { font: 38px/36px "Liberation Sans", sans-serif; }
.dan-input {
  position: absolute; left: 27px; bottom: -1px; width: 291px; height: 11px; background: #fff;
  color: #2c4aa0; font: 11px/14px "Liberation Sans", sans-serif; padding-left: 12px; overflow: hidden;
}
.vscroll { width: 13px; flex: none; background: #f0f0f4; position: relative; }
.thumb { position: absolute; left: 0; top: 14px; width: 13px; height: 14px; background: #cdcdcf; }
.arrow-up, .arrow-down {
  position: absolute; left: 4px; width: 5px; height: 5px; border-left: 1px solid #555; border-top: 1px solid #555;
  transform: rotate(45deg);
}
.arrow-up { top: 6px; }
.arrow-down { bottom: 5px; transform: rotate(225deg); }

/* command */
.cmd { height: 52px; flex: none; position: relative; border: 3px solid #e0101c; background: #fff; display: flex; }
.cmdside { width: 24px; flex: none; background: #4c4b4e; position: relative; }
.cmdgrip { position: absolute; left: 1px; top: 2px; right: 1px; height: 6px; background: repeating-linear-gradient(90deg, #8c8c8f 0 1px, transparent 1px 3px); }
.cmdx { position: absolute; left: 3px; top: 9px; color: #fff; font: bold 22px/24px "Liberation Sans", sans-serif; }
.cmdhook { position: absolute; left: 2px; bottom: 0; width: 10px; height: 8px; }
.cmdbody { flex: 1; display: flex; flex-direction: column; }
.cmdhist { height: 24px; background: #c8c8c8; border-bottom: 2px solid #a6a6a8; padding-left: 2px; }
.cmdlabel { font: 18px/22px "Noto Sans CJK SC", sans-serif; color: #222; }
.cmdline { flex: 1; background: #fff; display: flex; align-items: center; padding-left: 6px; }
.prompt { width: 16px; height: 15px; background: #cfcfd6; color: #444; font: bold 9px/15px "DejaVu Sans Mono", monospace; text-align: center; }
.promptcaret { width: 7px; height: 5px; margin-left: 4px; }
.ime {
  position: absolute; left: 61px; top: 1px; width: 407px; height: 25px; background: #fff;
  display: flex; align-items: center; padding-left: 16px; box-shadow: 0 1px 2px #bbb;
  z-index: 2;
}
.cand { font: 18px/22px "Liberation Serif", "Noto Sans CJK SC", serif; color: #5f86bd; margin-right: 17px; white-space: pre; letter-spacing: .2px; }
.cand:last-of-type { letter-spacing: .7px; }
.cand.first { color: #c84a50; }
.imenav { width: 24px; height: 14px; margin-left: 8px; }
.imedrop { width: 16px; height: 16px; border: 1px solid #cfd8e6; margin-left: 4px; display: flex; align-items: center; justify-content: center; }
.imedrop svg { width: 8px; height: 6px; }
.imesmile { width: 20px; height: 20px; margin-left: 10px; }
.pinkbox { position: absolute; left: 24px; top: 19px; width: 216px; height: 27px; border: 2px solid #ef8ea0; z-index: 3; }
.ibeam { position: absolute; left: 145px; top: 27px; width: 8px; height: 16px; z-index: 4; }

/* status */
.status { height: 26px; flex: none; background: #3f3e40; display: flex; align-items: flex-start; justify-content: space-between; }
.stabs { display: flex; gap: 4px; padding-left: 9px; margin-top: 2px; }
.stab {
  height: 15px; padding: 0 7px; background: #5b5a5d; color: #a9a9ab; border-radius: 0 0 7px 7px;
  font: 10px/15px "Noto Sans CJK SC", sans-serif; white-space: nowrap;
}
.stab.on { background: #807f82; color: #f0f0f0; font-weight: 500; padding: 0 9px; }
.stab.addt { padding: 0 5px; color: #ddd; font: bold 12px/14px "Liberation Sans", sans-serif; margin-left: 6px; }
.sright {
  width: 497px; height: 23px; display: flex; align-items: center; background: #4e4d50;
  font: 10px/14px "Noto Sans CJK SC", sans-serif; color: #d8d8da; padding-left: 1px; border-bottom: 1px solid #5c5c5e;
}
.smodel { width: 23px; flex: none; }
.si { width: 16px; height: 16px; flex: none; margin-left: 3px; filter: blur(.25px); }
.si.sc { width: 12px; margin-left: 1px; }
.ssep { width: 1px; height: 16px; background: #6a696c; flex: none; margin-left: 3px; }
.sratio { font: bold 10px/14px "Liberation Sans", sans-serif; margin-left: 4px; }

/* logo overlay */
.brand {
  position: absolute; left: 52px; top: 43px; height: 46px; display: flex; align-items: center;
  color: #fff;
  filter: drop-shadow(1px 0 0 #111) drop-shadow(-1px 0 0 #111) drop-shadow(0 1px 0 #111) drop-shadow(0 -1px 0 #111);
}
.brand-first { font: 900 39px/46px "Noto Sans CJK SC", sans-serif; -webkit-text-stroke: 1px #fff; margin-right: 2px; }
.brand-cn { font: 900 31px/46px "Noto Sans CJK SC", sans-serif; -webkit-text-stroke: 1px #fff; margin-left: 1px; margin-top: -6px; }
.brand-en { font: 700 30px/46px "Inter", sans-serif; margin-top: -4px; }
.brand-o { width: 21px; height: 21px; margin: 6px 0 0; position: relative; flex: none; }
.brand-o > svg:first-child { width: 21px; height: 21px; display: block; }
.brand-tick { position: absolute; left: 4px; top: -11px; width: 16px; height: 10px; }

/* red card overlay */
.card { position: absolute; left: 967px; top: 265px; width: 273px; height: 290px; }
.card-back { position: absolute; left: 3px; top: 26px; width: 250px; height: 250px; background: #a4939a; transform: rotate(5deg); }
.card-front { position: absolute; left: 0; top: 25px; width: 250px; height: 249px; background: #d31a38; overflow: hidden; }
.card-gloss {
  position: absolute; inset: 0;
  background: linear-gradient(170deg, #da3e58, #d42542 75%);
  clip-path: polygon(0 0, 210px 0, 0 195px);
}
.card-title {
  position: absolute; left: 73px; top: 0; color: #fff; white-space: nowrap;
  font: 500 33px/40px "Noto Sans CJK SC", sans-serif; letter-spacing: -.4px;
  text-shadow: 1px 1px 0 #5a0d1a, -1px 1px 0 #5a0d1a, 2px 2px 1px #5a0d1a;
}
.card-text {
  position: absolute; left: 41px; top: 74px; color: #fff; white-space: nowrap;
  font: 30px/38px "Liberation Sans", sans-serif;
  text-shadow: 1px 1px 1px #6a1222, -1px 1px 1px #6a1222;
}
.small { font: 500 20px/38px "Noto Sans CJK SC", sans-serif; margin-right: 2px; }
.card-logo { position: absolute; left: 5px; top: 0; width: 68px; height: 88px; }

/* watermark */
.wm {
  position: absolute; left: 974px; top: 587px; width: 235px; height: 115px; background: #1f2e57;
  display: flex; align-items: center; padding-left: 14px;
}
.wm-icon { width: 47px; height: 50px; margin-top: -1px; flex: none; }
.wm-text { margin-left: 18px; margin-top: -4px; }
.wm-cn { color: #cfd0d2; font: 700 32px/34px "Noto Sans CJK SC", sans-serif; letter-spacing: 5px; white-space: nowrap; height: 34px; overflow: hidden; }
.wm-en { color: #bfc1c6; font: 300 14px/17px "Inter", sans-serif; letter-spacing: 1.85px; white-space: nowrap; margin-top: 3px; }
```
